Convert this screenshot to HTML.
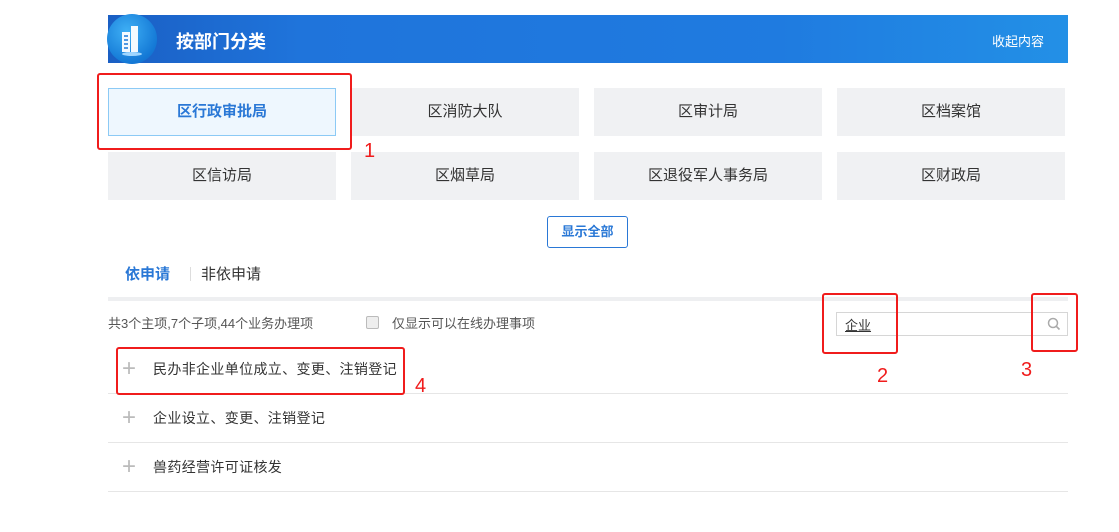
<!DOCTYPE html>
<html><head><meta charset="utf-8"><style>
body{margin:0;width:1119px;height:532px;background:#fff;font-family:"Liberation Sans","Noto Sans CJK SC",sans-serif;position:relative;overflow:hidden;color:#333}
.a{position:absolute}
.hdr{left:108px;top:15px;width:960px;height:48px;background:linear-gradient(90deg,#1a5fc4 0%,#1f74db 20%,#1f7be0 70%,#2390e6 100%)}
.btn{position:absolute;width:228px;height:48px;background:#f0f1f3;font-size:15px;text-align:center;line-height:48px;color:#333}
.red{position:absolute;border:2px solid #f01c1c;border-radius:3px}
.num{position:absolute;color:#f01c1c;font-size:20px}
.row{position:absolute;left:108px;width:960px;height:48px;border-bottom:1px solid #e6e6e6;font-size:14px;line-height:48px}
.row span.p{position:absolute;left:14px;color:#bbb;font-size:24px;font-weight:300}
.row span.t{position:absolute;left:45px;letter-spacing:.35px}
</style></head><body>
<div class="a hdr"></div>
<div class="a" style="left:107px;top:14px;width:50px;height:50px;border-radius:50%;background:radial-gradient(circle at 40% 35%,#3fb0f5,#1479d6 70%,#1163c4)"></div>
<svg class="a" style="left:118px;top:22px" width="28" height="34" viewBox="0 0 28 34"><path d="M4 10h8v20H4zM13 4h7v26h-7z" fill="#fff" opacity=".95"/><path d="M6 14h4M6 18h4M6 22h4M6 26h4" stroke="#1a78d8" stroke-width="1.5"/><ellipse cx="14" cy="32" rx="10" ry="2" fill="#9fd6ff"/></svg>
<div class="a" style="left:176px;top:28px;color:#fff;font-size:18px;font-weight:bold">按部门分类</div>
<div class="a" style="left:992px;top:31px;color:#fff;font-size:13px">收起内容</div>

<div class="btn" style="left:108px;top:88px;background:#eef7fe;border:1px solid #8ccaf5;width:226px;height:46px;line-height:46px;color:#2a78d6;font-weight:bold">区行政审批局</div>
<div class="btn" style="left:351px;top:88px">区消防大队</div>
<div class="btn" style="left:594px;top:88px">区审计局</div>
<div class="btn" style="left:837px;top:88px">区档案馆</div>
<div class="btn" style="left:108px;top:152px">区信访局</div>
<div class="btn" style="left:351px;top:152px">区烟草局</div>
<div class="btn" style="left:594px;top:152px">区退役军人事务局</div>
<div class="btn" style="left:837px;top:152px">区财政局</div>
<div class="red" style="left:97px;top:73px;width:251px;height:73px"></div>
<div class="num" style="left:364px;top:140px">1</div>

<div class="a" style="left:547px;top:216px;width:79px;height:30px;border:1px solid #2a78d6;border-radius:3px;color:#2a78d6;font-size:13px;font-weight:bold;text-align:center;line-height:30px">显示全部</div>

<div class="a" style="left:125px;top:263px;font-size:15px;color:#2a78d6;font-weight:bold">依申请</div>
<div class="a" style="left:190px;top:267px;width:1px;height:14px;background:#ddd"></div>
<div class="a" style="left:201px;top:263px;font-size:15px;color:#333">非依申请</div>
<div class="a" style="left:108px;top:297px;width:960px;height:4px;background:#eeeff1"></div>

<div class="a" style="left:108px;top:313px;font-size:13px;color:#555">共3个主项,7个子项,44个业务办理项</div>
<div class="a" style="left:366px;top:316px;width:11px;height:11px;border:1px solid #bbb;background:#eee;border-radius:2px"></div>
<div class="a" style="left:392px;top:313px;font-size:13px;color:#555">仅显示可以在线办理事项</div>
<div class="a" style="left:836px;top:312px;width:230px;height:22px;border:1px solid #d6d6d6"></div>
<div class="a" style="left:845px;top:315px;font-size:13px;color:#333;text-decoration:underline">企业</div>
<svg class="a" style="left:1047px;top:317px" width="14" height="14" viewBox="0 0 14 14"><circle cx="6" cy="6" r="4.5" fill="none" stroke="#aaa" stroke-width="1.5"/><path d="M9.3 9.3L12.5 12.5" stroke="#aaa" stroke-width="1.6"/></svg>
<div class="red" style="left:822px;top:293px;width:72px;height:57px"></div>
<div class="red" style="left:1031px;top:293px;width:43px;height:55px"></div>
<div class="num" style="left:877px;top:365px">2</div>
<div class="num" style="left:1021px;top:359px">3</div>

<div class="row" style="top:345px"><span class="p">+</span><span class="t">民办非企业单位成立、变更、注销登记</span></div>
<div class="row" style="top:394px"><span class="p">+</span><span class="t">企业设立、变更、注销登记</span></div>
<div class="row" style="top:443px"><span class="p">+</span><span class="t">兽药经营许可证核发</span></div>
<div class="red" style="left:116px;top:347px;width:285px;height:44px"></div>
<div class="num" style="left:415px;top:375px">4</div>
</body></html>
